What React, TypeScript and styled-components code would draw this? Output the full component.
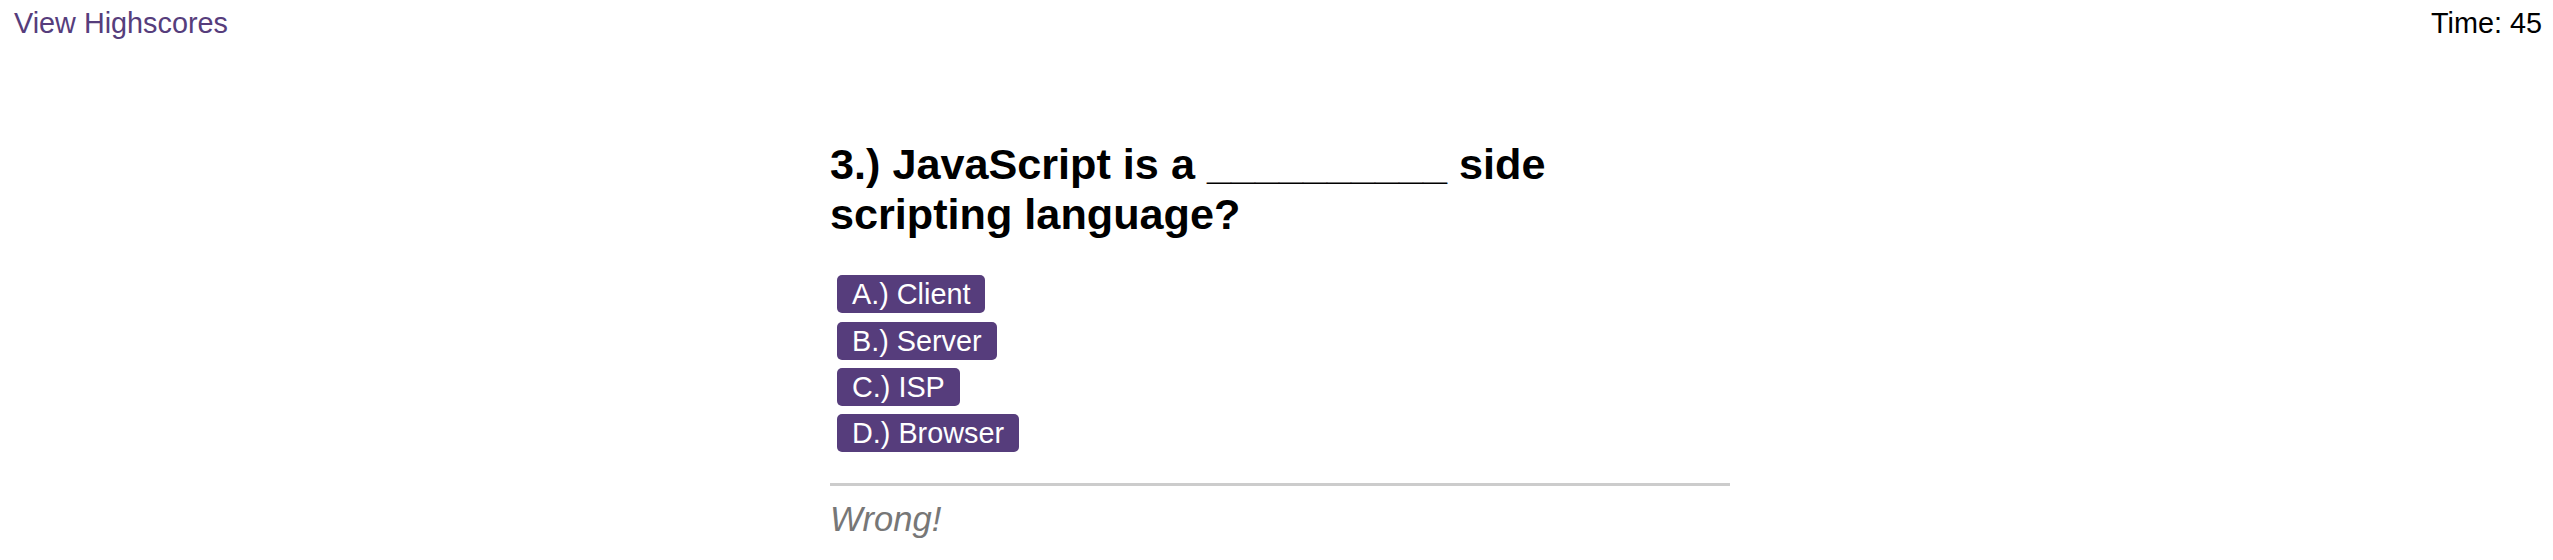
import { useState } from 'react'
import styled, { createGlobalStyle } from 'styled-components'

const GlobalStyle = createGlobalStyle`
  html, body {
    margin: 0;
    padding: 0;
    background: #fff;
    font-family: Arial, "Liberation Sans", sans-serif;
  }
`

const Header = styled.header`
  display: flex;
  justify-content: space-between;
  align-items: flex-start;
  padding: 6.5px 11px 0 14px;
  font-size: 28.8px;
  line-height: 1.149;
`

const HighscoreLink = styled.a`
  color: #563d7c;
  text-decoration: none;
  cursor: pointer;
`

const Timer = styled.span`
  color: #000;
`

const Quiz = styled.main`
  width: 900px;
  margin: 0 0 0 calc(50% - 446.5px);
  padding-top: 64.6px;
`

const Question = styled.h2`
  margin: 36px 0 36px;
  font-size: 43.2px;
  font-weight: bold;
  line-height: 1.149;
  color: #000;
`

const Choices = styled.div`
  display: flex;
  flex-direction: column;
  align-items: flex-start;
  gap: 8.3px;
  padding-left: 7px;
`

const ChoiceButton = styled.button`
  height: 38px;
  padding: 0 15px;
  border: none;
  border-radius: 5px;
  background: #563d7c;
  color: #fff;
  font-family: Arial, "Liberation Sans", sans-serif;
  font-size: 28.8px;
  line-height: 38px;
  cursor: pointer;
`

const Divider = styled.hr`
  height: 3px;
  margin: 31px 0 0;
  border: none;
  background: #ccc;
`

const Feedback = styled.p`
  margin: 14px 0 0;
  font-size: 34.56px;
  font-style: italic;
  line-height: 1.149;
  color: #777;
`

const choices = ['A.) Client', 'B.) Server', 'C.) ISP', 'D.) Browser']

export default function App() {
  const [time] = useState(45)

  return (
    <>
      <GlobalStyle />
      <Header>
        <HighscoreLink>View Highscores</HighscoreLink>
        <Timer>Time: {time}</Timer>
      </Header>
      <Quiz>
        <Question>3.) JavaScript is a __________ side scripting language?</Question>
        <Choices>
          {choices.map((c) => (
            <ChoiceButton key={c}>{c}</ChoiceButton>
          ))}
        </Choices>
        <Divider />
        <Feedback>Wrong!</Feedback>
      </Quiz>
    </>
  )
}
